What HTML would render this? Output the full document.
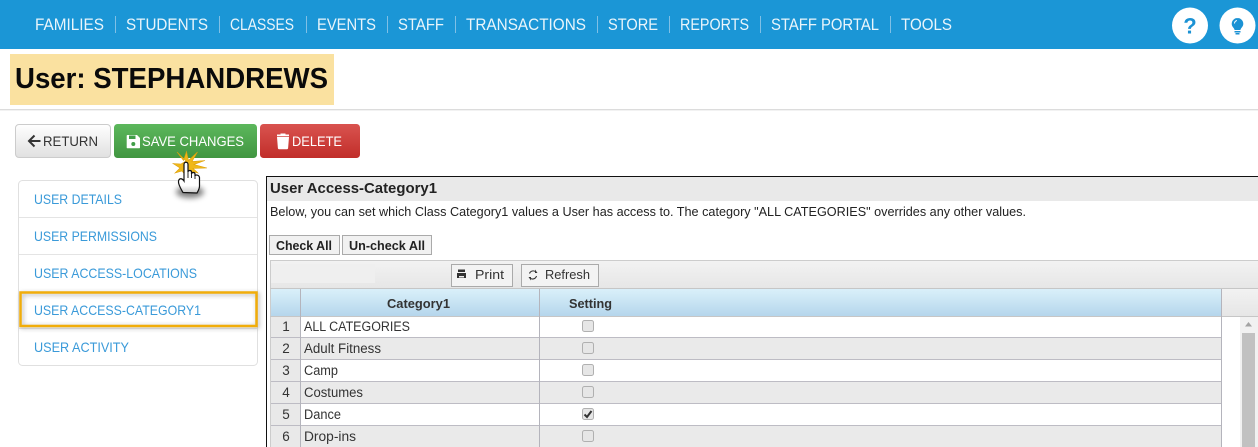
<!DOCTYPE html>
<html><head><meta charset="utf-8"><style>
html,body{margin:0;padding:0;background:#fff;width:1258px;height:447px;overflow:hidden}
svg{display:block}
text{font-family:"Liberation Sans",sans-serif}
.n{fill:#e9f5fb;font-size:16.5px}
.m{fill:#3a9ad9;font-size:14px}
.r{fill:#333;font-size:13.5px}
.b{fill:#222;font-size:13px;font-weight:bold}
</style></head><body>
<svg width="1258" height="447" viewBox="0 0 1258 447" xmlns="http://www.w3.org/2000/svg">
<defs>
<linearGradient id="gw" x1="0" y1="0" x2="0" y2="1"><stop offset="0" stop-color="#fff"/><stop offset="1" stop-color="#e0e0e0"/></linearGradient>
<linearGradient id="gg" x1="0" y1="0" x2="0" y2="1"><stop offset="0" stop-color="#5cb85c"/><stop offset="1" stop-color="#419641"/></linearGradient>
<linearGradient id="gr" x1="0" y1="0" x2="0" y2="1"><stop offset="0" stop-color="#d9534f"/><stop offset="1" stop-color="#c12e2a"/></linearGradient>
<linearGradient id="gh" x1="0" y1="0" x2="0" y2="1"><stop offset="0" stop-color="#daf0fa"/><stop offset="1" stop-color="#b5d6ec"/></linearGradient>
<linearGradient id="gt" x1="0" y1="0" x2="0" y2="1"><stop offset="0" stop-color="#f2f2f2"/><stop offset="1" stop-color="#e6e6e6"/></linearGradient>
<linearGradient id="gb" x1="0" y1="0" x2="0" y2="1"><stop offset="0" stop-color="#ffffff"/><stop offset=".75" stop-color="#ffffff"/><stop offset="1" stop-color="#c8c8c8"/></linearGradient>
<filter id="sh" x="-20%" y="-40%" width="140%" height="180%"><feGaussianBlur stdDeviation="2.5"/></filter>
<filter id="sh2" x="-50%" y="-50%" width="200%" height="200%"><feGaussianBlur stdDeviation="3"/></filter>
</defs>

<!-- top bar -->
<rect width="1258" height="49" fill="#1b96d6"/>
<g class="nav">
<text class="n" x="35" y="30" textLength="69" lengthAdjust="spacingAndGlyphs">FAMILIES</text>
<text class="n" x="126" y="30" textLength="82" lengthAdjust="spacingAndGlyphs">STUDENTS</text>
<text class="n" x="230" y="30" textLength="64" lengthAdjust="spacingAndGlyphs">CLASSES</text>
<text class="n" x="317" y="30" textLength="59" lengthAdjust="spacingAndGlyphs">EVENTS</text>
<text class="n" x="398" y="30" textLength="46" lengthAdjust="spacingAndGlyphs">STAFF</text>
<text class="n" x="466" y="30" textLength="120" lengthAdjust="spacingAndGlyphs">TRANSACTIONS</text>
<text class="n" x="608" y="30" textLength="50" lengthAdjust="spacingAndGlyphs">STORE</text>
<text class="n" x="680" y="30" textLength="69" lengthAdjust="spacingAndGlyphs">REPORTS</text>
<text class="n" x="771" y="30" textLength="108" lengthAdjust="spacingAndGlyphs">STAFF PORTAL</text>
<text class="n" x="901" y="30" textLength="51" lengthAdjust="spacingAndGlyphs">TOOLS</text>
</g>
<g stroke="#7fc0e6" stroke-width="1">
<path d="M115.5 16V33M219.5 16V33M306.5 16V33M387.5 16V33M455.5 16V33M597.5 16V33M669.5 16V33M760.5 16V33M890.5 16V33"/>
</g>
<circle cx="1190" cy="25.5" r="18" fill="#fff"/>
<circle cx="1237.5" cy="25.5" r="18" fill="#fff"/>
<text x="1190" y="33.500" text-anchor="middle" style="font-size:22px;font-weight:bold;fill:#1b92d4">?</text>
<path d="M1237.500 18a5.800 5.800 0 0 0-5.800 5.800c0 1.900.8 2.900 1.700 3.900.6.700 1 1.400 1.200 2.300h5.800c.2-.9.600-1.600 1.200-2.300.9-1 1.700-2 1.700-3.900a5.800 5.800 0 0 0-5.800-5.800z" fill="#1b92d4"/>
<path d="M1234.500 23.500a3.200 3.200 0 0 1 2.400-3" stroke="#fff" stroke-width="1" fill="none"/>
<rect x="1234.500" y="31" width="6" height="1.500" fill="#1b92d4"/><rect x="1235.500" y="33" width="4" height="1.500" fill="#1b92d4"/>

<!-- title -->
<rect x="10" y="54" width="324" height="51" fill="#fae1a0"/>
<text x="15" y="88" textLength="313" lengthAdjust="spacingAndGlyphs" style="font-size:29px;font-weight:bold;fill:#0a0a0a">User: STEPHANDREWS</text>
<rect x="0" y="109" width="1258" height="1" fill="#dcdcdc"/>
<rect x="0" y="110" width="1258" height="1" fill="#f2f2f2"/>

<!-- buttons -->
<rect x="15.5" y="124.5" width="95" height="33" rx="3.5" fill="url(#gw)" stroke="#ccc"/>
<path d="M34.500 135.500l-5.500 5.500 5.500 5.500M29.500 141H40.500" fill="none" stroke="#333" stroke-width="2"/>
<text x="43" y="146" textLength="55" lengthAdjust="spacingAndGlyphs" style="font-size:14px;fill:#333">RETURN</text>
<rect x="114" y="124" width="143" height="34" rx="3.500" fill="url(#gg)"/>
<path d="M127.500 135h9.500l3 3v9.500a.8.8 0 0 1-.8.8h-11.700a.8.8 0 0 1-.8-.8v-11.700a.8.8 0 0 1 .8-.8z" fill="#fff"/>
<rect x="129" y="135.500" width="6.500" height="3.500" fill="#419e48"/><circle cx="133.300" cy="144" r="2" fill="#419e48"/>
<text x="142" y="146" textLength="102" lengthAdjust="spacingAndGlyphs" style="font-size:14px;fill:#fff">SAVE CHANGES</text>
<rect x="260" y="124" width="100" height="34" rx="3.500" fill="url(#gr)"/>
<path d="M277 137h12l-.9 11.300a1 1 0 0 1-1 .9h-8.200a1 1 0 0 1-1-.9zM277 134.500h12v1.700h-12zM280.500 133.500h5v1h-5z" fill="#fff"/>
<text x="292" y="146" textLength="50" lengthAdjust="spacingAndGlyphs" style="font-size:14px;fill:#fff">DELETE</text>

<!-- left menu -->
<rect x="18.500" y="180.500" width="239" height="185" rx="4" fill="#fff" stroke="#e0e0e0"/>
<path d="M19 217.500H257M19 254.500H257M19 328.500H257" stroke="#e4e4e4"/>
<text class="m" x="34" y="204" textLength="88" lengthAdjust="spacingAndGlyphs">USER DETAILS</text>
<text class="m" x="34" y="241" textLength="123" lengthAdjust="spacingAndGlyphs">USER PERMISSIONS</text>
<text class="m" x="34" y="278" textLength="163" lengthAdjust="spacingAndGlyphs">USER ACCESS-LOCATIONS</text>
<rect x="22" y="294" width="236" height="33" fill="none" stroke="#888" stroke-width="3" filter="url(#sh)" opacity=".55"/>
<rect x="20.500" y="292.500" width="236" height="33.500" fill="none" stroke="#f1ad0a" stroke-width="2.500"/>
<text class="m" x="34" y="315" textLength="167" lengthAdjust="spacingAndGlyphs">USER ACCESS-CATEGORY1</text>
<text class="m" x="34" y="352" textLength="95" lengthAdjust="spacingAndGlyphs">USER ACTIVITY</text>

<!-- panel -->
<path d="M266.500 447V176.500H1258" fill="none" stroke="#111" stroke-width="1"/>
<rect x="267" y="177" width="991" height="24" fill="#e9e9e9"/>
<text x="270" y="193" textLength="167" lengthAdjust="spacingAndGlyphs" style="font-size:15px;font-weight:bold;fill:#222">User Access-Category1</text>
<text x="270" y="216" textLength="756" lengthAdjust="spacingAndGlyphs" style="font-size:13px;fill:#222">Below, you can set which Class Category1 values a User has access to. The category "ALL CATEGORIES" overrides any other values.</text>

<rect x="269.500" y="235.500" width="70" height="19" fill="#f1f1f1" stroke="#aaa"/>
<text class="b" x="276" y="250" textLength="56" lengthAdjust="spacingAndGlyphs">Check All</text>
<rect x="342.500" y="235.500" width="89" height="19" fill="#f1f1f1" stroke="#aaa"/>
<text class="b" x="349" y="250" textLength="76" lengthAdjust="spacingAndGlyphs">Un-check All</text>

<!-- grid -->
<rect x="270.500" y="260.500" width="988" height="190" fill="#fff" stroke="#ccc"/>
<rect x="271" y="261" width="987" height="28" fill="url(#gt)"/>
<rect x="271" y="264" width="104" height="19" fill="#efefef"/>
<rect x="451.500" y="264.500" width="61" height="22" fill="#f3f3f3" stroke="#aaa"/>
<path d="M458 272h7v-2.500h-7zM457 273h9v5h-9z" fill="#333"/><rect x="459" y="276" width="5" height="1.500" fill="#eee"/>
<text x="475" y="279" textLength="29" lengthAdjust="spacingAndGlyphs" style="font-size:13px;fill:#333">Print</text>
<rect x="521.500" y="264.500" width="77" height="22" fill="#f3f3f3" stroke="#aaa"/>
<path d="M536 272a4 4 0 0 0-6.500 1.500M530 278a4 4 0 0 0 6.500-2" fill="none" stroke="#333" stroke-width="1.100"/>
<path d="M535 269.500v3.500h2.500zM531 280.500v-3.500h-2.500z" fill="#333"/>
<text x="545" y="279" textLength="45" lengthAdjust="spacingAndGlyphs" style="font-size:13px;fill:#333">Refresh</text>

<rect x="271" y="289" width="950" height="27" fill="url(#gh)"/>
<rect x="1222" y="289" width="36" height="27" fill="url(#gt)"/>
<path d="M270 288.500H1258M270 316.500H1258" stroke="#c6c6c6"/>
<text x="387" y="308" textLength="63" lengthAdjust="spacingAndGlyphs" style="font-size:13px;font-weight:bold;fill:#333">Category1</text>
<text x="569" y="308" textLength="43" lengthAdjust="spacingAndGlyphs" style="font-size:13px;font-weight:bold;fill:#333">Setting</text>

<rect x="301" y="338" width="920" height="21" fill="#eaeaea"/>
<rect x="301" y="382" width="920" height="21" fill="#eaeaea"/>
<rect x="301" y="426" width="920" height="21" fill="#eaeaea"/>
<rect x="271" y="317" width="30" height="130" fill="#e9e9e9"/>
<path d="M271 337.500H1221.500M271 359.500H1221.500M271 381.500H1221.500M271 403.500H1221.500M271 425.500H1221.500" stroke="#bdbcc4"/>
<path d="M300.500 289V447M539.500 289V447M1221.500 289V447" stroke="#b4b4bc"/>

<g style="font-size:13.500px;fill:#333" text-anchor="middle">
<text x="286" y="331">1</text><text x="286" y="353">2</text><text x="286" y="375">3</text>
<text x="286" y="397">4</text><text x="286" y="419">5</text><text x="286" y="441">6</text>
</g>
<text class="r" x="304" y="331" textLength="106" lengthAdjust="spacingAndGlyphs">ALL CATEGORIES</text>
<text class="r" x="304" y="353" textLength="77" lengthAdjust="spacingAndGlyphs">Adult Fitness</text>
<text class="r" x="304" y="375" textLength="34" lengthAdjust="spacingAndGlyphs">Camp</text>
<text class="r" x="304" y="397" textLength="59" lengthAdjust="spacingAndGlyphs">Costumes</text>
<text class="r" x="304" y="419" textLength="37" lengthAdjust="spacingAndGlyphs">Dance</text>
<text class="r" x="304" y="441" textLength="52" lengthAdjust="spacingAndGlyphs">Drop-ins</text>

<g fill="#e6e6e6" stroke="#b0b0b0">
<rect x="582.500" y="320.500" width="11" height="11" rx="2"/>
<rect x="582.500" y="342.500" width="11" height="11" rx="2"/>
<rect x="582.500" y="364.500" width="11" height="11" rx="2"/>
<rect x="582.500" y="386.500" width="11" height="11" rx="2"/>
<rect x="582.500" y="408.500" width="11" height="11" rx="2"/>
<rect x="582.500" y="430.500" width="11" height="11" rx="2"/>
</g>
<path d="M584.500 414.500l2.500 2.500 4.500-6" fill="none" stroke="#333" stroke-width="2"/>

<!-- scrollbar -->
<rect x="1240" y="317" width="18" height="130" fill="#f1f1f1"/>
<path d="M1245 326.500l3.500-4.500 3.500 4.500z" fill="#a3a3a3"/>
<rect x="1242" y="333" width="13" height="114" fill="#c1c1c1"/>

<!-- burst + hand -->
<path d="M186 161L177 152L183.500 160.500L186.500 151.500L188.500 160.500L197.500 152L192 161.500L205 160.500L194 164.500L207 168L193 168.500L198 173L189 171L186 176L182 171L175 173L180 168L173 163.500L181 164Z" fill="#f0b818" stroke="#dc9f0a" stroke-width=".6"/>
<ellipse cx="190" cy="192" rx="14" ry="6" fill="#000" opacity=".5" filter="url(#sh2)"/>
<path d="M183 192.500C181 189 178 184.500 178.500 181C179.500 177.500 182.500 178.500 184 181V164.500C184 161.500 188 161.500 188 164.500V172C188 170 191.500 170 191.500 172V174C191.500 172 195 172 195 174V176C195 174.500 199 174.500 199.500 177.500V186C199.500 189 198 191 197 193Z" fill="url(#gb)" stroke="#111" stroke-width="1.200"/>
<path d="M188 172V178M191.500 174V178M195 176V179" stroke="#111" stroke-width=".9"/>
</svg>
</body></html>
